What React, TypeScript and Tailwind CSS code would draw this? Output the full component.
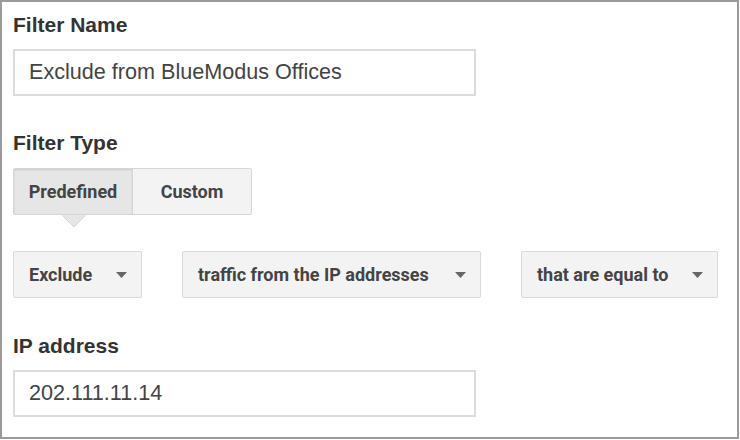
const LABEL = "font-['Liberation_Sans',Arial,sans-serif] text-[21px] font-bold leading-[24px] text-[#333]";
const FIELD =
  "flex h-[47px] w-[463px] items-center border-2 border-[#dcdcdc] bg-white pl-[14px] font-['Liberation_Sans',Arial,sans-serif] text-[21.6px] text-[#444]";

function Caret() {
  return (
    <svg width="11" height="6" viewBox="0 0 11 6" className="shrink-0">
      <path d="M0 0h11L5.5 6z" fill="#666" />
    </svg>
  );
}

function Select({ label, width }: { label: string; width: string }) {
  return (
    <div
      className={`flex h-[47px] items-center justify-between rounded-[2px] border border-[#dadada] bg-[#f3f3f3] pl-[15px] pr-[14px] font-['Roboto',sans-serif] text-[18px] font-bold text-[#444] ${width}`}
    >
      <span>{label}</span>
      <Caret />
    </div>
  );
}

export default function App() {
  return (
    <div className="h-[440px] w-[740px] bg-white">
      <div className="flex h-[439px] w-[739px] flex-col border-2 border-[#9b9b9b] pl-[11px] pt-[11px]">
        <div className={LABEL}>Filter Name</div>
        <div className={`mt-[12px] ${FIELD}`}>Exclude from BlueModus Offices</div>

        <div className={`mt-[35px] ${LABEL}`}>Filter Type</div>
        <div className="relative mt-[13px] flex h-[47px] w-[239px] rounded-[2px] border border-[#d6d6d6] font-['Roboto',sans-serif] text-[18px] font-bold text-[#444]">
          <div className="flex w-[119px] items-center justify-center border-r border-[#d6d6d6] bg-[#e6e6e6] shadow-[inset_0_1px_2px_rgba(0,0,0,0.12)]">
            Predefined
          </div>
          <div className="flex flex-1 items-center justify-center bg-[#f3f3f3]">Custom</div>
          <svg
            width="24"
            height="13"
            viewBox="0 0 24 13"
            className="absolute left-[48px] top-[46px]"
          >
            <path d="M0 0h24L12 12z" fill="#e6e6e6" />
            <path d="M0.5 0.5L12 12L23.5 0.5" fill="none" stroke="#d6d6d6" strokeWidth="1" />
          </svg>
        </div>

        <div className="mt-[36px] flex gap-[40px]">
          <Select label="Exclude" width="w-[129px]" />
          <Select label="traffic from the IP addresses" width="w-[299px]" />
          <Select label="that are equal to" width="w-[197px]" />
        </div>

        <div className={`mt-[36px] ${LABEL}`}>IP address</div>
        <div className={`mt-[12px] ${FIELD}`}>202.111.11.14</div>
      </div>
    </div>
  );
}
